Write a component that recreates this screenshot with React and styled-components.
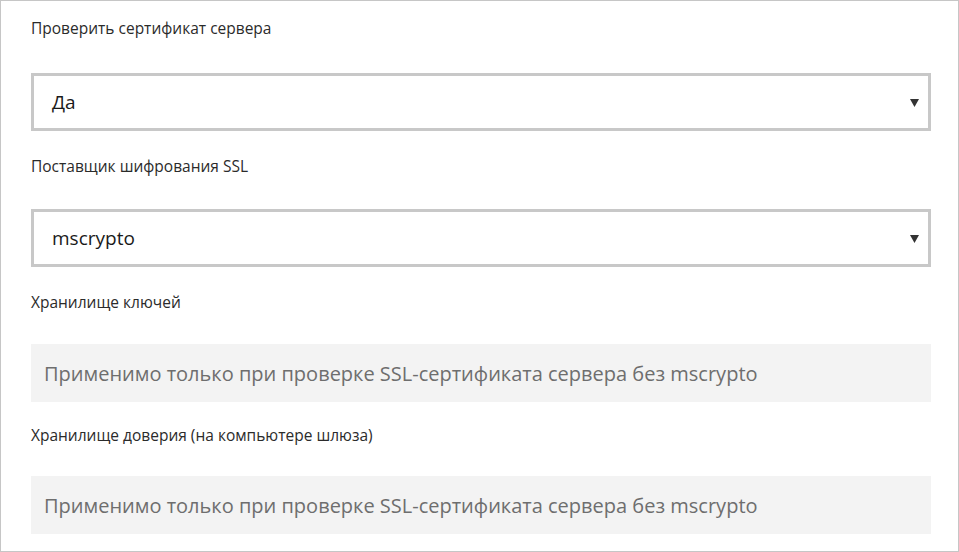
import styled, { createGlobalStyle } from "styled-components";

const GlobalStyle = createGlobalStyle`
  html, body {
    margin: 0;
    padding: 0;
    background: #ffffff;
  }
  body {
    font-family: "Open Sans", "Noto Sans", "Liberation Sans", sans-serif;
  }
`;

const Frame = styled.div`
  box-sizing: border-box;
  width: 959px;
  height: 552px;
  border: 1px solid #c6c6c6;
  padding: 18px 27px 0 30px;
  display: flex;
  flex-direction: column;
  overflow: hidden;
`;

const Group = styled.div`
  display: flex;
  flex-direction: column;
  margin-bottom: ${(p) => p.$space || 25}px;
`;

const Label = styled.label`
  font-size: 15.5px;
  line-height: 18px;
  color: #2b2b2b;
  margin-bottom: ${(p) => p.$gap || 36}px;
`;

const Select = styled.div`
  box-sizing: border-box;
  height: 58px;
  border: 3px solid #c8c8c8;
  background: #fff;
  display: flex;
  align-items: center;
  justify-content: space-between;
  padding: 0 9px 0 18px;
  font-size: 19px;
  color: #1a1a1a;
`;

const Arrow = styled.svg`
  width: 9px;
  height: 9px;
  display: block;
`;

const Readonly = styled.div`
  box-sizing: border-box;
  height: 58px;
  background: #f3f3f3;
  display: flex;
  align-items: center;
  padding: 0 13px;
  font-size: 20px;
  color: #6e6e6e;
`;

function Dropdown({ value }) {
  return (
    <Select>
      <span>{value}</span>
      <Arrow viewBox="0 0 9 9">
        <polygon points="0,1 9,1 4.5,9" fill="#333" />
      </Arrow>
    </Select>
  );
}

const hint = "Применимо только при проверке SSL-сертификата сервера без mscrypto";

export default function App() {
  return (
    <>
      <GlobalStyle />
      <Frame>
        <Group $space={26}>
          <Label $gap={36}>Проверить сертификат сервера</Label>
          <Dropdown value="Да" />
        </Group>
        <Group $space={26}>
          <Label $gap={34}>Поставщик шифрования SSL</Label>
          <Dropdown value="mscrypto" />
        </Group>
        <Group $space={24}>
          <Label $gap={33}>Хранилище ключей</Label>
          <Readonly>{hint}</Readonly>
        </Group>
        <Group>
          <Label $gap={32}>Хранилище доверия (на компьютере шлюза)</Label>
          <Readonly>{hint}</Readonly>
        </Group>
      </Frame>
    </>
  );
}
